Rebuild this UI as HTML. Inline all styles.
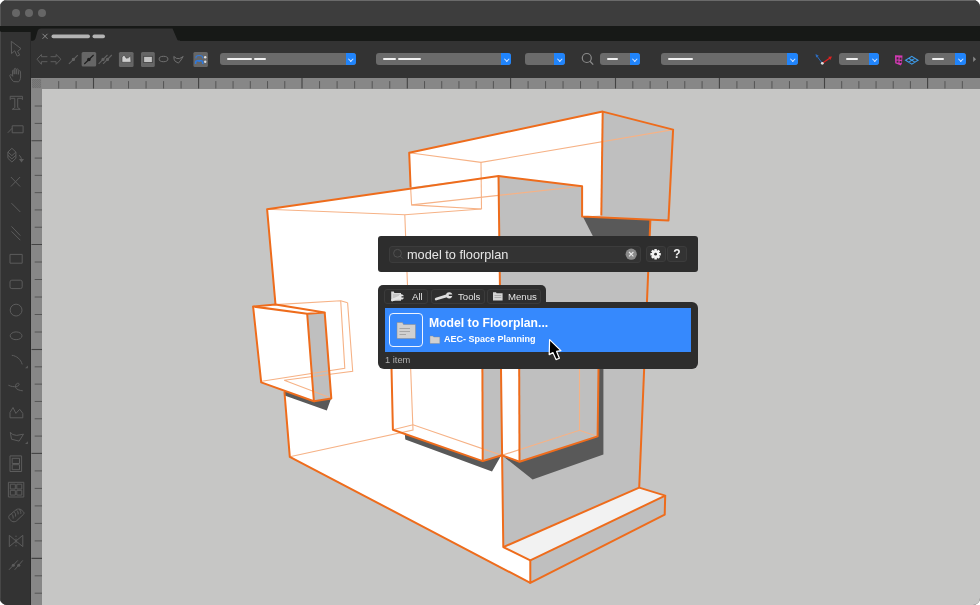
<!DOCTYPE html>
<html><head><meta charset="utf-8">
<style>
html,body{margin:0;padding:0;background:#fff;width:980px;height:605px;overflow:hidden;}
*{box-sizing:border-box;}
#win{position:absolute;left:0;top:0;width:980px;height:605px;border-radius:7px;overflow:hidden;background:#333;font-family:"Liberation Sans",sans-serif;}
.abs{position:absolute;}
#title{left:0;top:0;width:980px;height:26px;background:#3d3d3d;border-top:1px solid #6a6a6a;}
.tl{position:absolute;top:9px;width:8px;height:8px;border-radius:50%;background:#666;}
#tabbar{left:0;top:26px;width:980px;height:15px;background:#171917;}
#tools{left:0;top:31.5px;width:30px;height:574px;background:#333;}
#sep{left:29.5px;top:31.5px;width:1.5px;height:574px;background:#2a2a2a;}
#tbar{left:31px;top:40.5px;width:949px;height:37.5px;background:#333;}
.dd{position:absolute;top:53px;height:12px;background:#6b6b6b;border-radius:3px;overflow:hidden;}
.dd .b{position:absolute;right:0;top:0;bottom:0;width:10.5px;background:#2084fb;}
.dd .b:after{content:"";position:absolute;left:3.6px;top:3.5px;width:2.6px;height:2.6px;border-right:1px solid #d4e4ff;border-bottom:1px solid #d4e4ff;transform:rotate(45deg);}
.bar{position:absolute;top:5px;height:2.2px;background:#f2f2f2;border-radius:1px;}
#rtop{left:42px;top:78px;width:938px;height:10.5px;background:#878787;}
#rcorner{left:31px;top:78px;width:11px;height:10.5px;background:repeating-conic-gradient(#727272 0 25%,#7a7a7a 0 50%) 0 0/2px 2px;border:1.3px solid #858585;}
#rleft{left:31px;top:88.5px;width:11px;height:517px;background:#878787;}
#canvas{left:42px;top:88.5px;width:938px;height:517px;background:#c6c6c5;}
</style></head><body>
<div id="win">
  <div id="title" class="abs">
    <div class="tl" style="left:11.7px;top:8.3px"></div>
    <div class="tl" style="left:25px;top:8.3px"></div>
    <div class="tl" style="left:38.3px;top:8.3px"></div>
  </div>
  <div id="tabbar" class="abs"></div>
  <div id="tools" class="abs"></div>
  <div id="sep" class="abs"></div>
  <div id="tbar" class="abs"></div>
  <svg class="abs" style="left:0;top:0" width="980" height="90">
    <path d="M31,42 L31,40.8 C34,40.8 35,40 35.6,38 L37.6,31 C38.2,29.5 39,28.5 41,28.5 L172.5,28.5 L177,39 C177.4,40 178,40.6 180,40.6 L180,42 Z" fill="#333"/>
  </svg>

  <svg class="abs" style="left:0;top:0" width="31" height="605">
    <rect x="0" y="31.5" width="1" height="574" fill="#474747"/>
    <rect x="0" y="0" width="1" height="26" fill="#555"/>
    <g fill="none" stroke="#5c5c5c" stroke-width="1" stroke-linejoin="round">
      <path d="M11.3,41.3 L11.5,53.6 L14.7,50.8 L17.2,56.1 L19.7,55.1 L17.6,51.4 L21,48.6 Z"/>
      <path d="M13.5,81.6 C11.6,79.6 10.1,77.2 9.8,75.6 C9.7,74.5 11,74.3 12.1,75.5 L12.7,76.3 L12.4,70.8 C12.4,69.8 13.9,69.8 14,70.8 L14.2,74.2 L14.3,69 C14.4,68 15.9,68 16,69 L16.2,74.2 L16.5,69.5 C16.6,68.6 18.1,68.6 18.2,69.5 L18.3,74.4 L18.8,71.3 C19,70.4 20.4,70.5 20.5,71.4 L20.6,77 C20.4,79.5 19.6,81 18.6,81.8 Z"/>
      <path d="M10.2,96.3 L22.4,96.3 L22.4,99.6 L21.3,98.3 L17.7,98.3 L17.7,107.6 L20.2,109.3 L12.3,109.3 L14.8,107.6 L14.8,98.3 L11.3,98.3 L10.2,99.6 Z"/>
      <rect x="12.2" y="125.8" width="10.9" height="7"/>
      <path d="M7.8,132.8 L12.2,128.2"/>
      <path d="M11.9,148.3 L15.9,152 L11.9,155.7 L7.9,152 Z M7.9,152 L7.9,158.3 L11.9,162 L15.9,158.3 L15.9,152 M7.9,155.2 L11.9,158.9 L15.9,155.2"/>
      <path d="M19,155.2 C20.5,156.2 21.2,157.6 21.4,159.4"/>
      <path d="M10.9,177 L20.1,186.5 M20.1,177 L10.9,186.5"/>
      <path d="M11.5,203.2 L20.3,212"/>
      <path d="M11.5,226.4 L20.3,235.6 M11.5,231.4 L20.3,240.2"/>
      <rect x="10" y="254.4" width="12.2" height="8.8"/>
      <rect x="10" y="280.2" width="12.2" height="8.4" rx="1.8"/>
      <circle cx="16.1" cy="310.1" r="5.9"/>
      <ellipse cx="16.1" cy="335.8" rx="5.9" ry="3.9"/>
      <path d="M11.8,355.3 C16.5,355.8 21,359.5 22.2,364.4"/>
      <path d="M8.4,385.2 C11,386.5 14,387 16.5,386.5 C19,386 19.8,384 18.5,383.3 C17,382.8 15.2,384.5 15.5,387 C16,389.5 19.5,390.5 22.8,390.8"/>
      <path d="M10,417.8 L10,412.5 L13,407.5 L15.9,413.4 L19.7,409.3 L22.8,413.4 L22.8,417.8 Z"/>
      <path d="M10.3,432.3 L12.8,434.5 L16.6,435.4 L23.5,434.2 L19.1,441.1 L11.5,439.2 Z"/>
      <rect x="10" y="455.9" width="11.6" height="15.6"/>
      <rect x="12.2" y="458.3" width="7.3" height="5.2"/>
      <rect x="12.2" y="464.7" width="7.3" height="5"/>
      <rect x="8.4" y="482.3" width="15.4" height="14.7"/>
      <rect x="10.3" y="484.2" width="5" height="4.8"/><rect x="16.8" y="484.2" width="5" height="4.8"/>
      <rect x="10.3" y="490.3" width="5" height="4.8"/><rect x="16.8" y="490.3" width="5" height="4.8"/>
      <path d="M9,515.6 L16.3,509.6 C17.5,508.8 19.8,508.8 21,509.6 L23.4,511.8 C24.2,512.6 24.2,513.6 23.4,514.4 L16.4,521 C15.2,522 13,522 11.8,521.2 L9.4,519 C8.6,518 8.6,516.6 9,515.6 Z M11.3,513.7 C12.6,514.6 13.4,516.4 13.1,518.6 M13.8,511.6 C15.1,512.5 15.9,514.3 15.6,516.5 M16.3,509.8 C17.6,510.7 18.4,512.5 18.1,514.4 M19,509.2 C20.3,510.1 21.1,511.9 20.8,513.8"/>
      <path d="M9.3,535.3 L16,541 L9.3,546.6 Z M22.8,535.3 L16,541 L22.8,546.6 Z"/>
      <path d="M9,569.8 L17.8,560.4 M14.7,569.8 L22.8,560.4"/>
    </g>
    <g fill="#5c5c5c">
      <path d="M25.1,368.2 L27.9,365.5 L27.9,368.2 Z"/>
      <path d="M25.1,444 L27.9,441.3 L27.9,444 Z"/>
      <path d="M19,159 L24,159 L21.5,162.6 Z"/>
      <circle cx="13.3" cy="565.3" r="1.5"/><circle cx="18.7" cy="565.3" r="1.5"/><rect x="15.5" y="535.6" width="1" height="1.4"/><rect x="15.5" y="538.6" width="1" height="1.4"/><rect x="15.5" y="542" width="1" height="1.4"/><rect x="15.5" y="545" width="1" height="1.4"/>
    </g>
  </svg>
  <div id="rcorner" class="abs"></div>
  <div id="rtop" class="abs"></div>
  <div id="rleft" class="abs"></div>
  <div id="canvas" class="abs"></div>
<div class="dd" style="left:220.1px;width:136.0px"><div class="bar" style="left:6.9px;width:25.0px"></div><div class="bar" style="left:33.9px;width:12.0px"></div><div class="b" style="width:10.6px"></div></div>
<div class="dd" style="left:375.7px;width:135.5px"><div class="bar" style="left:7.3px;width:13.0px"></div><div class="bar" style="left:22.3px;width:23.0px"></div><div class="b" style="width:9.8px"></div></div>
<div class="dd" style="left:524.9px;width:39.7px"><div class="b" style="width:10.3px"></div></div>
<div class="dd" style="left:599.5px;width:40.5px"><div class="bar" style="left:7.5px;width:11.0px"></div><div class="b" style="width:10.3px"></div></div>
<div class="dd" style="left:661.1px;width:136.7px"><div class="bar" style="left:6.9px;width:25.0px"></div><div class="b" style="width:10.8px"></div></div>
<div class="dd" style="left:839.3px;width:39.7px"><div class="bar" style="left:6.7px;width:12.0px"></div><div class="b" style="width:9.7px"></div></div>
<div class="dd" style="left:925.3px;width:40.4px"><div class="bar" style="left:6.7px;width:12.0px"></div><div class="b" style="width:10.5px"></div></div>

  <svg class="abs" style="left:0;top:0" width="980" height="605"><line x1="93.50" y1="78" x2="93.50" y2="88.5" stroke="#434343" stroke-width="1.1"/><line x1="198.60" y1="78" x2="198.60" y2="88.5" stroke="#434343" stroke-width="1.1"/><line x1="302.00" y1="78" x2="302.00" y2="88.5" stroke="#434343" stroke-width="1.1"/><line x1="407.30" y1="78" x2="407.30" y2="88.5" stroke="#434343" stroke-width="1.1"/><line x1="510.60" y1="78" x2="510.60" y2="88.5" stroke="#434343" stroke-width="1.1"/><line x1="615.50" y1="78" x2="615.50" y2="88.5" stroke="#434343" stroke-width="1.1"/><line x1="719.40" y1="78" x2="719.40" y2="88.5" stroke="#434343" stroke-width="1.1"/><line x1="824.50" y1="78" x2="824.50" y2="88.5" stroke="#434343" stroke-width="1.1"/><line x1="927.60" y1="78" x2="927.60" y2="88.5" stroke="#434343" stroke-width="1.1"/><line x1="76.10" y1="81.1" x2="76.10" y2="88.5" stroke="#555" stroke-width="1"/><line x1="58.70" y1="81.1" x2="58.70" y2="88.5" stroke="#555" stroke-width="1"/><line x1="111.02" y1="81.1" x2="111.02" y2="88.5" stroke="#555" stroke-width="1"/><line x1="128.53" y1="81.1" x2="128.53" y2="88.5" stroke="#555" stroke-width="1"/><line x1="146.05" y1="81.1" x2="146.05" y2="88.5" stroke="#555" stroke-width="1"/><line x1="163.57" y1="81.1" x2="163.57" y2="88.5" stroke="#555" stroke-width="1"/><line x1="181.08" y1="81.1" x2="181.08" y2="88.5" stroke="#555" stroke-width="1"/><line x1="215.83" y1="81.1" x2="215.83" y2="88.5" stroke="#555" stroke-width="1"/><line x1="233.07" y1="81.1" x2="233.07" y2="88.5" stroke="#555" stroke-width="1"/><line x1="250.30" y1="81.1" x2="250.30" y2="88.5" stroke="#555" stroke-width="1"/><line x1="267.53" y1="81.1" x2="267.53" y2="88.5" stroke="#555" stroke-width="1"/><line x1="284.77" y1="81.1" x2="284.77" y2="88.5" stroke="#555" stroke-width="1"/><line x1="319.55" y1="81.1" x2="319.55" y2="88.5" stroke="#555" stroke-width="1"/><line x1="337.10" y1="81.1" x2="337.10" y2="88.5" stroke="#555" stroke-width="1"/><line x1="354.65" y1="81.1" x2="354.65" y2="88.5" stroke="#555" stroke-width="1"/><line x1="372.20" y1="81.1" x2="372.20" y2="88.5" stroke="#555" stroke-width="1"/><line x1="389.75" y1="81.1" x2="389.75" y2="88.5" stroke="#555" stroke-width="1"/><line x1="424.52" y1="81.1" x2="424.52" y2="88.5" stroke="#555" stroke-width="1"/><line x1="441.73" y1="81.1" x2="441.73" y2="88.5" stroke="#555" stroke-width="1"/><line x1="458.95" y1="81.1" x2="458.95" y2="88.5" stroke="#555" stroke-width="1"/><line x1="476.17" y1="81.1" x2="476.17" y2="88.5" stroke="#555" stroke-width="1"/><line x1="493.38" y1="81.1" x2="493.38" y2="88.5" stroke="#555" stroke-width="1"/><line x1="528.08" y1="81.1" x2="528.08" y2="88.5" stroke="#555" stroke-width="1"/><line x1="545.57" y1="81.1" x2="545.57" y2="88.5" stroke="#555" stroke-width="1"/><line x1="563.05" y1="81.1" x2="563.05" y2="88.5" stroke="#555" stroke-width="1"/><line x1="580.53" y1="81.1" x2="580.53" y2="88.5" stroke="#555" stroke-width="1"/><line x1="598.02" y1="81.1" x2="598.02" y2="88.5" stroke="#555" stroke-width="1"/><line x1="632.82" y1="81.1" x2="632.82" y2="88.5" stroke="#555" stroke-width="1"/><line x1="650.13" y1="81.1" x2="650.13" y2="88.5" stroke="#555" stroke-width="1"/><line x1="667.45" y1="81.1" x2="667.45" y2="88.5" stroke="#555" stroke-width="1"/><line x1="684.77" y1="81.1" x2="684.77" y2="88.5" stroke="#555" stroke-width="1"/><line x1="702.08" y1="81.1" x2="702.08" y2="88.5" stroke="#555" stroke-width="1"/><line x1="736.92" y1="81.1" x2="736.92" y2="88.5" stroke="#555" stroke-width="1"/><line x1="754.43" y1="81.1" x2="754.43" y2="88.5" stroke="#555" stroke-width="1"/><line x1="771.95" y1="81.1" x2="771.95" y2="88.5" stroke="#555" stroke-width="1"/><line x1="789.47" y1="81.1" x2="789.47" y2="88.5" stroke="#555" stroke-width="1"/><line x1="806.98" y1="81.1" x2="806.98" y2="88.5" stroke="#555" stroke-width="1"/><line x1="841.68" y1="81.1" x2="841.68" y2="88.5" stroke="#555" stroke-width="1"/><line x1="858.87" y1="81.1" x2="858.87" y2="88.5" stroke="#555" stroke-width="1"/><line x1="876.05" y1="81.1" x2="876.05" y2="88.5" stroke="#555" stroke-width="1"/><line x1="893.23" y1="81.1" x2="893.23" y2="88.5" stroke="#555" stroke-width="1"/><line x1="910.42" y1="81.1" x2="910.42" y2="88.5" stroke="#555" stroke-width="1"/><line x1="944.98" y1="81.1" x2="944.98" y2="88.5" stroke="#555" stroke-width="1"/><line x1="962.35" y1="81.1" x2="962.35" y2="88.5" stroke="#555" stroke-width="1"/><line x1="31.5" y1="140.80" x2="42" y2="140.80" stroke="#434343" stroke-width="1.1"/><line x1="31.5" y1="244.50" x2="42" y2="244.50" stroke="#434343" stroke-width="1.1"/><line x1="31.5" y1="349.50" x2="42" y2="349.50" stroke="#434343" stroke-width="1.1"/><line x1="31.5" y1="453.40" x2="42" y2="453.40" stroke="#434343" stroke-width="1.1"/><line x1="31.5" y1="558.40" x2="42" y2="558.40" stroke="#434343" stroke-width="1.1"/><line x1="34.7" y1="123.40" x2="42" y2="123.40" stroke="#555" stroke-width="1"/><line x1="34.7" y1="106.00" x2="42" y2="106.00" stroke="#555" stroke-width="1"/><line x1="34.7" y1="158.08" x2="42" y2="158.08" stroke="#555" stroke-width="1"/><line x1="34.7" y1="175.37" x2="42" y2="175.37" stroke="#555" stroke-width="1"/><line x1="34.7" y1="192.65" x2="42" y2="192.65" stroke="#555" stroke-width="1"/><line x1="34.7" y1="209.93" x2="42" y2="209.93" stroke="#555" stroke-width="1"/><line x1="34.7" y1="227.22" x2="42" y2="227.22" stroke="#555" stroke-width="1"/><line x1="34.7" y1="262.00" x2="42" y2="262.00" stroke="#555" stroke-width="1"/><line x1="34.7" y1="279.50" x2="42" y2="279.50" stroke="#555" stroke-width="1"/><line x1="34.7" y1="297.00" x2="42" y2="297.00" stroke="#555" stroke-width="1"/><line x1="34.7" y1="314.50" x2="42" y2="314.50" stroke="#555" stroke-width="1"/><line x1="34.7" y1="332.00" x2="42" y2="332.00" stroke="#555" stroke-width="1"/><line x1="34.7" y1="366.82" x2="42" y2="366.82" stroke="#555" stroke-width="1"/><line x1="34.7" y1="384.13" x2="42" y2="384.13" stroke="#555" stroke-width="1"/><line x1="34.7" y1="401.45" x2="42" y2="401.45" stroke="#555" stroke-width="1"/><line x1="34.7" y1="418.77" x2="42" y2="418.77" stroke="#555" stroke-width="1"/><line x1="34.7" y1="436.08" x2="42" y2="436.08" stroke="#555" stroke-width="1"/><line x1="34.7" y1="470.90" x2="42" y2="470.90" stroke="#555" stroke-width="1"/><line x1="34.7" y1="488.40" x2="42" y2="488.40" stroke="#555" stroke-width="1"/><line x1="34.7" y1="505.90" x2="42" y2="505.90" stroke="#555" stroke-width="1"/><line x1="34.7" y1="523.40" x2="42" y2="523.40" stroke="#555" stroke-width="1"/><line x1="34.7" y1="540.90" x2="42" y2="540.90" stroke="#555" stroke-width="1"/><line x1="34.7" y1="575.80" x2="42" y2="575.80" stroke="#555" stroke-width="1"/><line x1="34.7" y1="593.20" x2="42" y2="593.20" stroke="#555" stroke-width="1"/></svg>
  <svg class="abs" style="left:0;top:0" width="980" height="90">
    <path d="M42.5,33.8 L47.5,38.8 M47.5,33.8 L42.5,38.8" stroke="#8a8a8a" stroke-width="1"/>
    <rect x="51.5" y="34.6" width="38.5" height="3.6" rx="1.8" fill="#b4b4b4"/>
    <rect x="92.5" y="34.6" width="12.5" height="3.6" rx="1.8" fill="#b4b4b4"/>
    <g fill="none" stroke="#5e5e5e" stroke-width="1">
      <path d="M47.4,56.7 L41.4,56.7 L41.4,54.5 L37,59.2 L41.4,64.3 L41.4,61.7 L47.4,61.7"/>
      <path d="M50.6,56.7 L56.1,56.7 L56.1,54.5 L60.9,59.2 L56.1,64.3 L56.1,61.7 L50.6,61.7"/>
    </g>
    <g stroke="#626262" stroke-width="1.1" fill="#626262">
      <line x1="68.9" y1="63.8" x2="77.8" y2="55.1"/><circle cx="73.4" cy="59.4" r="1.1"/>
      <line x1="98.6" y1="63.8" x2="107.5" y2="55"/><circle cx="103" cy="59.4" r="1.1"/>
      <line x1="103.1" y1="63.8" x2="111.8" y2="55"/><circle cx="107.5" cy="59.4" r="1.1"/>
    </g>
    <rect x="81.6" y="51.9" width="14.6" height="14.7" rx="1.5" fill="#666"/>
    <g stroke="#1e1e1e" stroke-width="1.2" fill="#1e1e1e">
      <line x1="84.3" y1="64" x2="93.6" y2="55"/><circle cx="88.9" cy="59.5" r="1.2"/>
    </g>
    <rect x="118.9" y="52.1" width="14.7" height="14.8" rx="1.5" fill="#666"/>
    <path d="M122,62.3 L122,57 L124.2,55 L126.3,58.2 L128.4,57.8 L130.6,55.8 L131,62.3 Z" fill="#cfcfcf" stroke="#3a3a3a" stroke-width="0.6"/>
    <rect x="141" y="52.1" width="13.8" height="14.8" rx="1.5" fill="#666"/>
    <rect x="143.7" y="56.3" width="8.6" height="6.3" fill="#c4c4c4" stroke="#3a3a3a" stroke-width="0.8"/>
    <ellipse cx="163.5" cy="59" rx="4.4" ry="2.7" fill="none" stroke="#777" stroke-width="0.9"/>
    <path d="M173.8,56.5 L176.5,58.4 L179.5,58.6 L183.2,56.5 L180,61.5 L178.2,63 L175.2,61.3 L174.2,59.5 Z" fill="none" stroke="#777" stroke-width="0.9"/>
    <rect x="193.4" y="52.1" width="14.5" height="14.8" rx="1.5" fill="#666"/>
    <g fill="none" stroke="#3079dc">
      <path d="M195.8,58.4 L196.2,56.4 C197.5,55.2 201,55.2 202.3,56.4 L202.7,58.4" stroke-width="1.1"/>
      <path d="M195.6,64 L195.8,61.4 C197.2,60.2 201.2,60.2 202.6,61.4 L202.8,64 M199.2,60.6 L199.2,62" stroke-width="1.6"/>
    </g>
    <circle cx="205.2" cy="57.2" r="1.2" fill="#ddd"/><circle cx="205.2" cy="61.8" r="1.2" fill="#ddd"/>
    <circle cx="586.8" cy="58" r="4.5" fill="none" stroke="#8a8a8a" stroke-width="1.2"/>
    <line x1="590" y1="61.3" x2="593.2" y2="64.6" stroke="#8a8a8a" stroke-width="1.3"/>
    <line x1="822.3" y1="63.3" x2="816.5" y2="55.5" stroke="#2d6cc0" stroke-width="1"/>
    <path d="M815.5,54 L818.8,55.8 L816.2,57.6 Z" fill="#2d6cc0"/>
    <line x1="822.3" y1="63.3" x2="830" y2="58" stroke="#e02020" stroke-width="1.2"/>
    <path d="M832,56.5 L828.2,56.8 L830.3,60 Z" fill="#e02020"/>
    <circle cx="822.3" cy="63.3" r="1.4" fill="#ddd"/>
    <path d="M895,55.2 L902.5,55.5 L902,63.3 L900.8,65.5 L895.2,63.3 Z" fill="#d33ab4"/>
    <g fill="#3a2c36"><rect x="896.6" y="57.3" width="1.9" height="2.2"/><rect x="899.6" y="57.6" width="1.9" height="2.2"/><rect x="896.6" y="60.6" width="1.9" height="2"/><rect x="899.6" y="61" width="1.9" height="2"/></g>
    <path d="M905.6,60.2 L911.8,56.3 L918,60.2 L911.8,64.1 Z M908.7,58.25 L914.9,62.15 M914.9,58.25 L908.7,62.15" fill="none" stroke="#3d9be9" stroke-width="1.1"/>
    <path d="M973.2,56.5 L976,59.3 L973.2,62 Z" fill="#888"/>
  </svg>

  <svg class="abs" style="left:0;top:0" width="980" height="605" viewBox="0 0 980 605">
    <g stroke="none">
      <!-- big white left face -->
      <polygon fill="#fff" points="267.1,209.2 498.5,176 503.3,547.1 530.3,560.4 530.3,582.9 289.8,456.8"/>
      <!-- inner gray back-wall face -->
      <polygon fill="#bfbfbf" points="498.5,176 582.1,186.2 582.1,216.4 650.4,219.3 639.2,487.6 503.3,547.1"/>
      <!-- top arm white front -->
      <polygon fill="#fff" points="409.2,152.7 602.7,111.6 601.3,215.5 582.1,216.4 582.1,186.2 498.5,176 410.6,187.3"/>
      <!-- top arm gray side -->
      <polygon fill="#bfbfbf" points="602.7,111.6 673.1,129.6 668.5,220.4 601.3,215.5"/>
      <!-- shadow under top arm -->
      <polygon fill="#595959" points="582.8,216.6 650,219.6 650,250 600,250"/>
      <!-- platform top -->
      <polygon fill="#f2f2f2" points="503.3,547.1 639.2,487.6 665.2,495.6 530.3,560.4"/>
      <!-- platform front -->
      <polygon fill="#bfbfbf" points="530.3,560.4 665.2,495.6 664.7,514.6 530.3,582.9"/>
      <!-- H box (middle arm) -->
      <polygon fill="#bfbfbf" points="482.2,310 501.5,310 501.8,455.3 482.7,461.1"/>
      <!-- J box -->
      <polygon fill="#fff" points="501.5,310 519,310 519.5,461.7 501.8,455.3"/>
      <!-- H shadow -->
      <polygon fill="#595959" points="404.8,433.9 482.7,461.1 501,455.8 492,471.5 405.3,439.4"/>
      <!-- J shadow -->
      <polygon fill="#595959" points="599.3,310 603.4,310 603.4,454.4 532.6,479.4 504.1,457 519.5,461.7 597.6,436.4"/>
      <!-- bay box -->
      <polygon fill="#fff" points="253.1,306.5 275.5,304.6 324.7,312.6 307.2,313.8"/>
      <polygon fill="#fff" points="253.1,306.5 307.2,313.8 313.9,401.3 261.2,382.4"/>
      <polygon fill="#bfbfbf" points="307.2,313.8 324.7,312.6 331.3,398.4 313.9,401.3"/>
      <polygon fill="#595959" points="284.2,390.8 313.9,401.6 331,398.8 326.8,410.5 284.6,395.5"/>
    </g>
    <g fill="none" stroke="#f6b286" stroke-width="1.1">
      <polyline points="409.2,152.7 481,162.4 673.1,129.6"/>
      <polyline points="481,162.4 481.5,209"/>
      <polyline points="410.6,187.3 411.6,204.9 481.5,209"/>
      <polyline points="411.6,204.9 582.1,186.2"/>
      <polyline points="267.1,209.2 404.8,214.7 481.5,209"/>
      <polyline points="404.8,214.7 413,430.1 289.8,456.8"/>
      <polyline points="392.9,429.8 413,424.8 501.8,455.3 579.5,430.3 597.6,436.6"/>
      <polyline points="579.5,310 579.5,430.3"/>
      <polyline points="275.5,304.6 340.7,300.7 347.6,302.7"/>
      <polyline points="340.7,300.7 344.8,368.4 261.8,381.3"/>
      <polyline points="347.6,302.7 352.7,371.2 284.2,380.2 329.6,397.6"/>
    </g>
    <g fill="none" stroke="#ee6c1c" stroke-width="2" stroke-linejoin="round">
      <!-- big wall outline -->
      <polyline points="275.5,304.6 267.1,209.2 498.5,176 582.1,186.2 582.1,216.4 668.5,220.4 673.1,129.6 602.7,111.6 409.2,152.7 410.6,187.3"/>
      <polyline points="602.7,111.6 601.3,215.5"/>
      <polyline points="498.5,176 503.3,547.1 530.3,560.4 665.2,495.6 639.2,487.6 650.4,219.3"/>
      <polyline points="503.3,547.1 639.2,487.6"/>
      <polyline points="530.3,560.4 530.3,582.9 664.7,514.6 665.2,495.6"/>
      <polyline points="284.4,391.5 289.8,456.8 530.3,582.9"/>
      <!-- bay box -->
      <polygon points="253.1,306.5 275.5,304.6 324.7,312.6 307.2,313.8"/>
      <polyline points="253.1,306.5 261.2,382.4 313.9,401.3 307.2,313.8"/>
      <polyline points="324.7,312.6 331.3,398.4 313.9,401.3"/>
      <!-- H box -->
      <polyline points="390.2,310 392.9,429.8 482.7,461.1 501.8,455.3 519.5,461.7 597.6,436.4 599.3,310"/>
      <polyline points="482.2,310 482.7,461.1"/>
      <polyline points="519,310 519.5,461.7"/>
    </g>
  </svg>


  <!-- search panel -->
  <div class="abs" style="left:378px;top:236px;width:319.5px;height:36px;background:#2d2d2d;border-radius:3px;"></div>
  <div class="abs" style="left:388.5px;top:245.6px;width:252.5px;height:17px;background:#333333;border:1px solid #3c3c3c;border-radius:3px;"></div>
  <svg class="abs" style="left:0;top:0" width="980" height="605">
    <circle cx="397.5" cy="253.3" r="3.9" fill="none" stroke="#505050" stroke-width="1"/>
    <line x1="400.3" y1="256.1" x2="402.8" y2="258.6" stroke="#505050" stroke-width="1"/>
    <circle cx="631.2" cy="254.2" r="5.6" fill="#8a8a8a"/>
    <path d="M629,252 L633.4,256.4 M633.4,252 L629,256.4" stroke="#e8e8e8" stroke-width="1.1"/>
  </svg>
  <div class="abs" style="left:407px;top:246px;font-size:12.75px;line-height:17px;color:#e6e6e6;will-change:transform;">model to floorplan</div>
  <div class="abs" style="left:646px;top:246.2px;width:19.5px;height:15.5px;background:#333333;border:1px solid #3c3c3c;border-radius:3px;"></div>
  <div class="abs" style="left:667px;top:246.2px;width:19.7px;height:15.5px;background:#333333;border:1px solid #3c3c3c;border-radius:3px;"></div>
  <svg class="abs" style="left:0;top:0" width="980" height="605">
    <g transform="translate(655.6,254.2)" fill="#f4f4f4">
      <circle r="3.6"/>
      <g id="teeth">
        <rect x="-1.3" y="-5.2" width="2.6" height="10.4" rx="0.5"/>
        <rect x="-1.3" y="-5.2" width="2.6" height="10.4" rx="0.5" transform="rotate(45)"/>
        <rect x="-1.3" y="-5.2" width="2.6" height="10.4" rx="0.5" transform="rotate(90)"/>
        <rect x="-1.3" y="-5.2" width="2.6" height="10.4" rx="0.5" transform="rotate(135)"/>
      </g>
      <circle r="1.4" fill="#313131"/>
    </g>
  </svg>
  <div class="abs" style="left:667px;top:246px;width:19.7px;text-align:center;font-size:12px;font-weight:bold;line-height:16px;color:#f4f4f4;will-change:transform;">?</div>
  <!-- tab strip -->
  <div class="abs" style="left:378px;top:285.2px;width:167.5px;height:30px;background:#2d2d2d;border-radius:5px 5px 0 0;"></div>
  <div class="abs" style="left:378px;top:302px;width:319.5px;height:66.5px;background:#2d2d2d;border-radius:0 6px 6px 6px;"></div>
  <div class="abs" style="left:384.4px;top:289.2px;width:43.8px;height:14.7px;background:#2e2e2e;border:1px solid #3b3b3b;border-radius:3px;"></div>
  <div class="abs" style="left:431px;top:289.2px;width:53.6px;height:14.7px;background:#2e2e2e;border:1px solid #3b3b3b;border-radius:3px;"></div>
  <div class="abs" style="left:487.4px;top:289.2px;width:53.8px;height:14.7px;background:#2e2e2e;border:1px solid #3b3b3b;border-radius:3px;"></div>
  <div class="abs" style="left:412px;top:289.5px;font-size:9.6px;line-height:14px;color:#e4e4e4;will-change:transform;">All</div>
  <div class="abs" style="left:458px;top:289.5px;font-size:9.6px;line-height:14px;color:#e4e4e4;will-change:transform;">Tools</div>
  <div class="abs" style="left:508px;top:289.5px;font-size:9.6px;line-height:14px;color:#e4e4e4;will-change:transform;">Menus</div>
  <svg class="abs" style="left:0;top:0" width="980" height="605">
    <g fill="#d8d8d8">
      <path d="M391.2,291.5 L393.8,291.5 L394.4,293 L401,293 L401,300.7 L391.2,300.7 Z"/>
    </g>
    <g stroke="#9c9c9c" stroke-width="0.6"><line x1="393" y1="295" x2="400" y2="295"/><line x1="393" y1="297" x2="400" y2="297"/></g>
    <path d="M392.3,300.2 L398.5,297.3" stroke="#e4e4e4" stroke-width="2.4" stroke-linecap="round"/>
    <circle cx="401.2" cy="296.9" r="2.6" fill="#e4e4e4"/>
    <rect x="401.5" y="296.2" width="3" height="1.3" fill="#2e2e2e"/>
    <path d="M436.2,299 L446.5,295.8" stroke="#dcdcdc" stroke-width="2.8" stroke-linecap="round"/>
    <circle cx="449.2" cy="295.3" r="3.1" fill="#dcdcdc"/>
    <rect x="448.8" y="294.5" width="4" height="1.5" fill="#2e2e2e"/>
    <path d="M493,292.2 L496,292.2 L496.6,293.3 L502.6,293.3 L502.6,300.4 L493,300.4 Z" fill="#d4d4d4"/>
    <g stroke="#8e8e8e" stroke-width="0.6"><line x1="494.5" y1="295.5" x2="501.2" y2="295.5"/><line x1="494.5" y1="297.5" x2="501.2" y2="297.5"/></g>
  </svg>
  <!-- blue row -->
  <div class="abs" style="left:385.2px;top:308.2px;width:305.6px;height:44.1px;background:#3689fd;"></div>
  <div class="abs" style="left:388.9px;top:313.4px;width:34.1px;height:34px;border:1.2px solid #eef4ff;border-radius:4px;background:#3689fd;"></div>
  <svg class="abs" style="left:0;top:0" width="980" height="605">
    <path d="M397,322.5 L402.5,322.5 L403.5,324.5 L415.5,324.5 L415.5,338.5 L397,338.5 Z" fill="#d0d0d0" stroke="#8a8a8a" stroke-width="0.5"/>
    <g stroke="#9a9a9a" stroke-width="0.8"><line x1="399.5" y1="328.5" x2="410" y2="328.5"/><line x1="399.5" y1="331.5" x2="410" y2="331.5"/><line x1="399.5" y1="334.5" x2="406" y2="334.5"/></g>
    <path d="M430,336 L433,336 L433.6,337 L439.8,337 L439.8,343.5 L430,343.5 Z" fill="#d0d0d0" stroke="#8a8a8a" stroke-width="0.4"/>
  </svg>
  <div class="abs" style="left:429px;top:316px;font-size:12.2px;font-weight:bold;line-height:15px;color:#fff;will-change:transform;">Model to Floorplan...</div>
  <div class="abs" style="left:444.4px;top:334px;font-size:9px;font-weight:bold;line-height:11px;color:#fff;will-change:transform;">AEC- Space Planning</div>
  <div class="abs" style="left:384.8px;top:355.3px;font-size:9.3px;line-height:11px;color:#b0b0b0;will-change:transform;">1 item</div>
  <!-- cursor -->
  <svg class="abs" style="left:0;top:0" width="980" height="605">
    <path d="M549.6,339.6 L549.2,354.6 L552.9,352.6 L556,359.6 L559.4,358.3 L556.6,351.4 L560.9,350.6 Z" fill="#000" stroke="#fff" stroke-width="1.2" stroke-linejoin="round"/>
  </svg>
</div>
</body></html>
